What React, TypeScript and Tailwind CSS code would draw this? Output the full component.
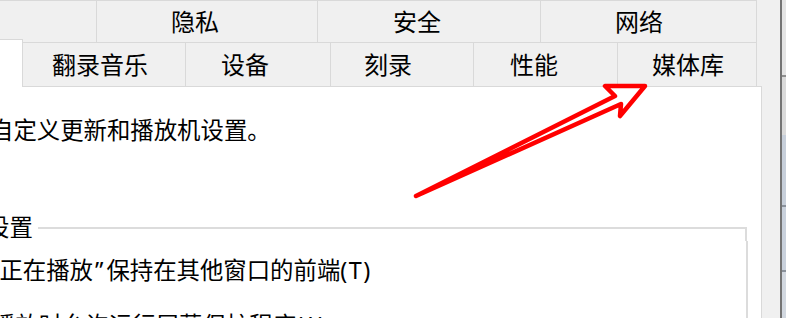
import React from "react";

const B = "border-[#d9d9d9]";

export default function App() {
  return (
    <div className="relative w-[786px] h-[318px] overflow-hidden flex bg-[#f0f0f0] text-black font-['Noto_Sans','Noto_Sans_CJK_SC',sans-serif]">
      {/* dialog area */}
      <div className="w-[780px] h-full flex flex-col">
        {/* tab row 1 */}
        <div className="flex h-[43px] w-[757px] text-[24px] leading-none">
          <div className={`w-[97px] border-t border-b border-r ${B}`}></div>
          <div className={`w-[221px] flex items-center pl-[74px] border-t border-b border-r ${B}`}>隐私</div>
          <div className={`w-[223px] flex items-center pl-[75px] border-t border-b border-r ${B}`}>安全</div>
          <div className={`w-[216px] flex items-center pl-[74px] border-t border-b border-r ${B}`}>网络</div>
        </div>
        {/* tab row 2 */}
        <div className="flex h-[43px] w-[757px] text-[24px] leading-none">
          <div className={`relative z-10 w-[23px] h-[48px] -mt-[4px] bg-white border-t border-r ${B}`}></div>
          <div className={`w-[163px] flex items-center pl-[29px] border-r ${B}`}>翻录音乐</div>
          <div className={`w-[145px] flex items-center pl-[35px] border-r ${B}`}>设备</div>
          <div className={`w-[143px] flex items-center pl-[33px] border-r ${B}`}>刻录</div>
          <div className={`w-[144px] flex items-center pl-[36px] border-r ${B}`}>性能</div>
          <div className={`w-[139px] flex items-center pl-[34px] border-r ${B}`}>媒体库</div>
        </div>
        {/* panel */}
        <div className={`w-[762px] flex-1 bg-white border-t border-r ${B} overflow-hidden text-[23.4px] leading-[28px] whitespace-nowrap`}>
          <div className="pt-[29px] -ml-[10px]">自定义更新和播放机设置。</div>
          <div className="mt-[69px] flex items-center w-[761px] -ml-[14px]">
            <span>设置</span>
            <div className="flex-1 ml-[5px] h-[14px] self-end border-t-2 border-r-2 border-[#dcdcdc]"></div>
          </div>
          <div className="w-[748px] border-r-2 border-[#dcdcdc]">
            <div className="pt-[15px] -ml-[9px]">
              “正在播放<span className="ml-[2px] mr-[3px]">”</span>保持在其他窗口的前端<span className="tracking-[1.5px]">(T)</span>
            </div>
            <div className="pt-[27px] -ml-[8px]">播放时允许运行屏幕保护程序(A)</div>
          </div>
        </div>
      </div>
      {/* window edge */}
      <div className="w-[2px] h-full bg-[#747474]"></div>
      <div className="w-[4px] h-full flex flex-col">
        <div className="h-[75px] bg-[#e4e4e4]"></div>
        <div className="h-[2px] bg-[#8e8e8e]"></div>
        <div className="h-[58px] bg-[#dadada]"></div>
        <div className="h-[70px] bg-[#c7cfda]"></div>
        <div className="h-[2px] bg-[#8a919b]"></div>
        <div className="h-[63px] bg-[#c9d1dc]"></div>
        <div className="h-[2px] bg-[#8a919b]"></div>
        <div className="flex-1 bg-[#d2d8e0]"></div>
      </div>
      {/* red annotation arrow */}
      <svg className="absolute left-0 top-0 pointer-events-none" width="786" height="318" viewBox="0 0 786 318">
        <polygon
          points="416,196 615,96 605,86 645,86 620,116 621,104"
          fill="none"
          stroke="#ff0000"
          strokeWidth="4.5"
          strokeLinejoin="round"
        />
      </svg>
    </div>
  );
}
